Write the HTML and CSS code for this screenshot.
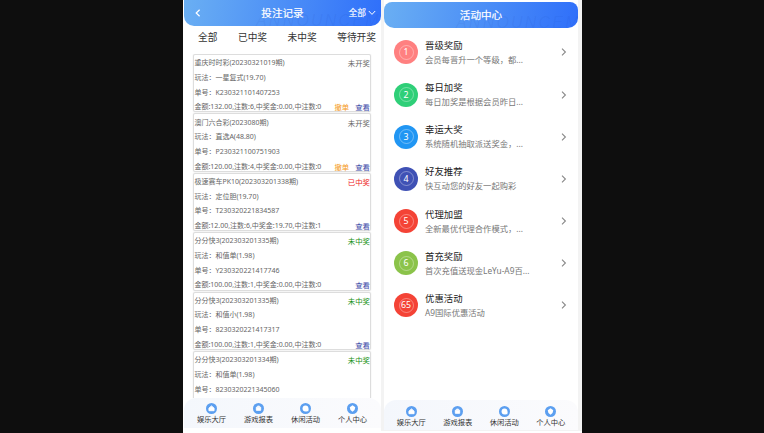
FILE: index.html
```html
<!DOCTYPE html>
<html lang="zh-CN">

<head>
    <meta charset="UTF-8">
    <meta name="viewport" content="width=device-width, initial-scale=1.0">
    <title>投注记录</title>
    <link rel="stylesheet" href="styles.css">
</head>

<body>
    <svg width="0" height="0" class="defs">
        <symbol id="icon-home" viewBox="0 0 12 12">
            <path d="M6 3.2 L8.8 5.6 V8.4 H3.2 V5.6 Z" fill="#fff" stroke="#fff" stroke-linejoin="round" />
        </symbol>
        <symbol id="icon-report" viewBox="0 0 12 12">
            <path d="M3.6 4.6 H8.4 V8 H3.6 Z M5 4.2 V3.4 H7 V4.2" fill="#fff" stroke="#fff" stroke-linejoin="round" />
        </symbol>
        <symbol id="icon-activity" viewBox="0 0 12 12">
            <circle cx="6" cy="6" r="3.2" fill="#fff" />
            <path d="M6.5 9 H9.2 V6 Z" fill="#fff" />
        </symbol>
        <symbol id="icon-user" viewBox="0 0 12 12">
            <path d="M6 2.5 L9 4.6 L8.2 7.6 L6 9.6 L3.8 7.6 L3 4.6 Z" fill="#fff" />
        </symbol>
        <symbol id="icon-right" viewBox="0 0 6 8">
            <path d="M1 0.7 L4.4 4 L1 7.3" fill="none" stroke="#888" stroke-width="1.1" />
        </symbol>
    </svg>
    <main class="main">
        <section class="phone records">
            <header class="heading">
                <span class="watermark">ANNOUNCEM</span>
                <svg class="back" viewBox="0 0 6 8"><path d="M4.6 0.7 L1.2 4 L4.6 7.3" fill="none" stroke="#fff" stroke-width="1.2" /></svg>
                <h1>投注记录</h1>
                <div class="filter">全部<svg viewBox="0 0 8 6"><path d="M0.8 1 L4 4.4 L7.2 1" fill="none" stroke="#fff" /></svg></div>
            </header>
            <nav class="tabs"><span>全部</span><span>已中奖</span><span>未中奖</span><span>等待开奖</span></nav>
            <div class="list">
                <div class="card">
                    <p>重庆时时彩(20230321019期)<em>未开奖</em></p>
                    <p>玩法：一星复式(19.70)</p>
                    <p>单号：K230321101407253</p>
                    <p>金额:132.00,注数:6,中奖金:0.00,中注数:0<b class="cancel">撤单</b><b>查看</b></p>
                </div>
                <div class="card">
                    <p>澳门六合彩(2023080期)<em>未开奖</em></p>
                    <p>玩法：直选A(48.80)</p>
                    <p>单号：P230321100751903</p>
                    <p>金额:120.00,注数:4,中奖金:0.00,中注数:0<b class="cancel">撤单</b><b>查看</b></p>
                </div>
                <div class="card">
                    <p>极速赛车PK10(202303201338期)<em class="win">已中奖</em></p>
                    <p>玩法：定位胆(19.70)</p>
                    <p>单号：T230320221834587</p>
                    <p>金额:12.00,注数:6,中奖金:19.70,中注数:1<b>查看</b></p>
                </div>
                <div class="card">
                    <p>分分快3(202303201335期)<em class="lose">未中奖</em></p>
                    <p>玩法：和值单(1.98)</p>
                    <p>单号：Y230320221417746</p>
                    <p>金额:100.00,注数:1,中奖金:0.00,中注数:0<b>查看</b></p>
                </div>
                <div class="card">
                    <p>分分快3(202303201335期)<em class="lose">未中奖</em></p>
                    <p>玩法：和值小(1.98)</p>
                    <p>单号：8230320221417317</p>
                    <p>金额:100.00,注数:1,中奖金:0.00,中注数:0<b>查看</b></p>
                </div>
                <div class="card">
                    <p>分分快3(202303201334期)<em class="lose">未中奖</em></p>
                    <p>玩法：和值单(1.98)</p>
                    <p>单号：8230320221345060</p>
                </div>
            </div>
            <footer class="navbar">
                <div class="item"><svg><use href="#icon-home" /></svg>娱乐大厅</div>
                <div class="item"><svg><use href="#icon-report" /></svg>游戏报表</div>
                <div class="item"><svg><use href="#icon-activity" /></svg>休闲活动</div>
                <div class="item"><svg><use href="#icon-user" /></svg>个人中心</div>
            </footer>
        </section>
        <section class="phone center">
            <header class="heading">
                <span class="watermark">ANNOUNCEM</span>
                <h1>活动中心</h1>
            </header>
            <div class="events">
                <div class="event">
                    <i class="badge pink">1</i>
                    <div class="info"><h2>晋级奖励</h2><p>会员每晋升一个等级，都...</p></div>
                    <svg class="arrow"><use href="#icon-right" /></svg>
                </div>
                <div class="event">
                    <i class="badge green">2</i>
                    <div class="info"><h2>每日加奖</h2><p>每日加奖是根据会员昨日...</p></div>
                    <svg class="arrow"><use href="#icon-right" /></svg>
                </div>
                <div class="event">
                    <i class="badge blue">3</i>
                    <div class="info"><h2>幸运大奖</h2><p>系统随机抽取派送奖金，...</p></div>
                    <svg class="arrow"><use href="#icon-right" /></svg>
                </div>
                <div class="event">
                    <i class="badge indigo">4</i>
                    <div class="info"><h2>好友推荐</h2><p>快互动您的好友一起购彩</p></div>
                    <svg class="arrow"><use href="#icon-right" /></svg>
                </div>
                <div class="event">
                    <i class="badge red">5</i>
                    <div class="info"><h2>代理加盟</h2><p>全新最优代理合作模式，...</p></div>
                    <svg class="arrow"><use href="#icon-right" /></svg>
                </div>
                <div class="event">
                    <i class="badge lime">6</i>
                    <div class="info"><h2>首充奖励</h2><p>首次充值送现金LeYu-A9百...</p></div>
                    <svg class="arrow"><use href="#icon-right" /></svg>
                </div>
                <div class="event">
                    <i class="badge red">65</i>
                    <div class="info"><h2>优惠活动</h2><p>A9国际优惠活动</p></div>
                    <svg class="arrow"><use href="#icon-right" /></svg>
                </div>
            </div>
            <footer class="navbar">
                <div class="item"><svg><use href="#icon-home" /></svg>娱乐大厅</div>
                <div class="item"><svg><use href="#icon-report" /></svg>游戏报表</div>
                <div class="item"><svg><use href="#icon-activity" /></svg>休闲活动</div>
                <div class="item"><svg><use href="#icon-user" /></svg>个人中心</div>
            </footer>
        </section>
    </main>
</body>

</html>
```
FILE: styles.css
```css
* {
    box-sizing: border-box;
}

body {
    margin: 0;
    height: 433px;
    overflow: hidden;
    background-color: #0e0e0e;
    font-family: "Noto Sans", "Noto Sans CJK SC", sans-serif;
    color: #333;
}

h1, h2, p {
    margin: 0;
    font-weight: 400;
}

.defs {
    display: block;
}

.main {
    display: flex;
    gap: 4px;
    width: 399px;
    height: 433px;
    margin-left: 183px;
    background: linear-gradient(#f3f3f3 431px, #fff 431px);
}

.phone {
    display: flex;
    flex-direction: column;
    height: 433px;
    background-color: #fff;
}

.records {
    width: 198px;
    padding-left: 1px;
}

.center {
    width: 194px;
    margin-left: -1px;
    height: 430px;
    padding-top: 2px;
}

.heading {
    display: flex;
    flex: none;
    position: relative;
    overflow: hidden;
    align-items: center;
    justify-content: center;
    height: 26px;
    border-radius: 0 0 10px 10px;
    background: linear-gradient(100deg, #6aaff3, #2f6ffa);
    color: #fff;
}

.center .heading {
    border-radius: 8px 8px 10px 10px;
}

.heading h1 {
    position: relative;
    font-size: 10.6px;
    line-height: 26px;
    -webkit-text-stroke: 0.2px #fff;
}

/* faint word running off the right edge of the bar */
.watermark {
    position: absolute;
    left: 72px;
    bottom: -3px;
    font: italic 400 16px/16px "Liberation Sans", sans-serif;
    letter-spacing: 2.2px;
    color: rgba(20, 60, 180, 0.08);
}

.back {
    position: absolute;
    left: 11px;
    width: 6px;
    height: 8px;
}

.filter {
    display: flex;
    position: absolute;
    right: 5px;
    align-items: center;
    gap: 2px;
    font-size: 8.8px;
    line-height: 24px;
    -webkit-text-stroke: 0.1px #fff;
}

.filter svg {
    width: 8px;
    height: 6px;
}

.tabs {
    display: flex;
    flex: none;
    justify-content: space-between;
    height: 28px;
    padding: 0 5px 5px 14px;
    font-size: 9.7px;
    line-height: 23px;
}

.list {
    flex: 1;
    overflow: hidden;
    padding: 0 10px 0 9px;
}

.card {
    height: 58.4px;
    margin-bottom: 1px;
    border: 1px solid #ddd;
    border-radius: 2px;
    box-shadow: 0 0 1px #ccc;
    padding: 1.2px 0 0 0.4px;
}

.card p {
    display: flex;
    height: 14.7px;
    font-size: 7px;
    line-height: 14.7px;
    white-space: nowrap;
    color: #666;
}

.card em {
    margin-left: auto;
    font-style: normal;
    font-size: 7.4px;
}

.card .win {
    color: #e22;
}

.card .lose {
    color: #149014;
}

.card b {
    margin-left: auto;
    font-weight: 400;
    font-size: 7.4px;
    color: #3c4aa8;
}

.card .cancel {
    color: #f59a23;
}

.card .cancel + b {
    margin-left: 6px;
}

.navbar {
    display: flex;
    flex: none;
    height: 30px;
    margin-top: auto;
    padding: 5px 5px 0 4px;
    border-radius: 12px 12px 0 0;
    background: linear-gradient(to right, #f4f7fc, #fbfbfd);
}

.records .navbar {
    margin-bottom: 5px;
}

.center .navbar {
    padding: 6px 4px 0;
}

.item {
    display: flex;
    flex: 1;
    flex-direction: column;
    align-items: center;
    font-size: 7.3px;
    line-height: 11px;
}

.item svg {
    width: 11px;
    height: 11px;
    border-radius: 50%;
    background-color: #5c9ff0;
}

.events {
    padding-top: 3.4px;
}

.event {
    display: flex;
    align-items: center;
    height: 42.15px;
    padding: 0 11px 0 10px;
}

.badge {
    display: flex;
    position: relative;
    align-items: center;
    justify-content: center;
    width: 24px;
    height: 24px;
    margin-right: 7px;
    border-radius: 50%;
    font-size: 8.8px;
    font-style: normal;
    color: #fff;
}

.badge::after {
    content: "";
    position: absolute;
    inset: 4.5px;
    border: 1px solid rgba(255, 255, 255, 0.35);
    border-radius: 50%;
}

.pink { background-color: #ff8080; }
.green { background-color: #2fcf78; }
.blue { background-color: #2196f3; }
.indigo { background-color: #3f51b5; }
.red { background-color: #f44336; }
.lime { background-color: #8bc34a; }

.info h2 {
    font-size: 9.4px;
    line-height: 14px;
    color: #222;
}

.info p {
    font-size: 8.3px;
    line-height: 13px;
    white-space: nowrap;
    color: #777;
}

.arrow {
    width: 6px;
    height: 8px;
    margin-left: auto;
}
```
